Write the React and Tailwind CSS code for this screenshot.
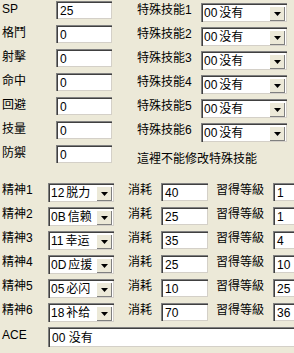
import React from "react";

const sunken =
  "bg-white border-t border-l border-[#808080] border-b-white border-r-white shadow-[inset_1px_1px_0_#404040,inset_-1px_-1px_0_#d4d0c8]";

function TextBox({ value, className = "" }) {
  return (
    <div className={`${sunken} shrink-0 flex items-center pl-[3px] leading-none whitespace-nowrap ${className}`}>
      {value}
    </div>
  );
}

function Combo({ code, name, className = "" }) {
  return (
    <div className={`${sunken} shrink-0 flex items-center justify-between pl-[2px] pr-[2px] leading-none ${className}`}>
      <span className="whitespace-nowrap">
        {code}
        <span className="ml-[2px]">{name}</span>
      </span>
      <span className="shrink-0 w-[16px] h-[15px] bg-[#ece9d8] border-t border-l border-white border-b-[#404040] border-r-[#404040] shadow-[inset_-1px_-1px_0_#808080] flex items-center justify-center">
        <svg width="7" height="4" viewBox="0 0 7 4">
          <path d="M0 0h7L3.5 4z" fill="#000" />
        </svg>
      </span>
    </div>
  );
}

const stats = [
  ["SP", "25"],
  ["格鬥", "0"],
  ["射擊", "0"],
  ["命中", "0"],
  ["回避", "0"],
  ["技量", "0"],
  ["防禦", "0"],
];

const spirits = [
  ["精神1", "12", "脱力", "40", "1"],
  ["精神2", "0B", "信赖", "25", "1"],
  ["精神3", "11", "幸运", "35", "4"],
  ["精神4", "0D", "应援", "25", "10"],
  ["精神5", "05", "必闪", "10", "25"],
  ["精神6", "18", "补给", "70", "36"],
];

export default function App() {
  return (
    <div
      className="w-[294px] h-[353px] bg-[#ece9d8] overflow-hidden text-[12px] text-black"
      style={{ fontFamily: '"Liberation Sans", "Noto Sans CJK SC", sans-serif' }}
    >
      {/* 能力值 + 特殊技能 */}
      <div className="flex h-[181px]">
        <div className="w-[137px] shrink-0 pt-[1px]">
          {stats.map(([label, val]) => (
            <div key={label} className="flex items-start h-[24px]">
              <span className="w-[56px] shrink-0 pl-[2px] leading-[16px]">{label}</span>
              <TextBox value={val} className="w-[56px] h-[18px]" />
            </div>
          ))}
        </div>
        <div className="w-[157px] shrink-0 pt-[3px]">
          {[1, 2, 3, 4, 5, 6].map((n) => (
            <div key={n} className="flex items-start h-[24px]">
              <span className="w-[64px] shrink-0 leading-[12px] pt-[1px] whitespace-nowrap">特殊技能{n}</span>
              <Combo code="00" name="没有" className="w-[86px] h-[19px]" />
            </div>
          ))}
          <div className="pt-[5px] leading-[14px] whitespace-nowrap">這裡不能修改特殊技能</div>
        </div>
      </div>

      {/* 精神 */}
      <div className="pt-[2px] w-[340px]">
        {spirits.map(([label, code, name, cost, lv]) => (
          <div key={label} className="flex items-start h-[24px] whitespace-nowrap">
            <span className="w-[48px] shrink-0 pl-[2px] leading-[14px]">{label}</span>
            <Combo code={code} name={name} className="w-[66px] h-[19px]" />
            <span className="ml-[14px] w-[33px] shrink-0 leading-[14px]">消耗</span>
            <TextBox value={cost} className="w-[47px] h-[18px]" />
            <span className="ml-[8px] w-[57px] shrink-0 leading-[14px]">習得等級</span>
            <TextBox value={lv} className="w-[40px] h-[18px]" />
          </div>
        ))}
        <div className="flex items-start h-[24px]">
          <span className="w-[48px] shrink-0 pl-[2px] leading-[14px] pt-[1px]">ACE</span>
          <TextBox value="00 没有" className="w-[260px] h-[20px]" />
        </div>
      </div>
    </div>
  );
}
